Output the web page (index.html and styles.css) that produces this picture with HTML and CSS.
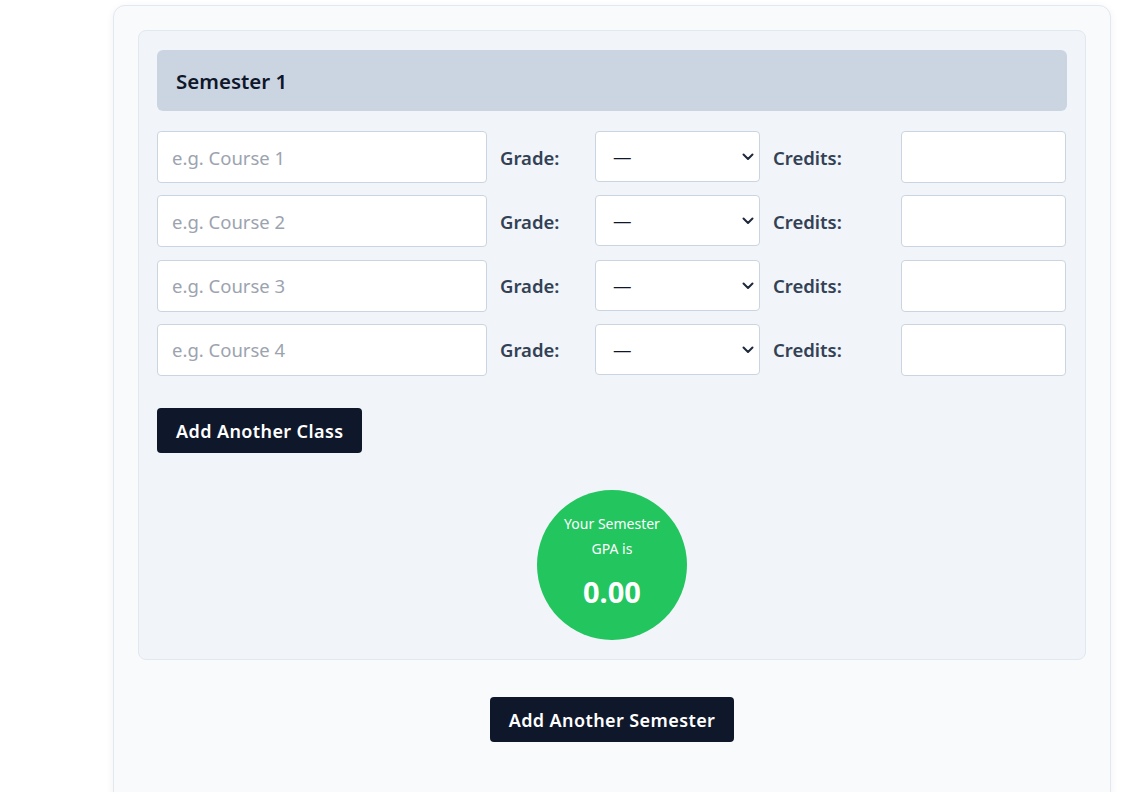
FILE: index.html
```html
<!DOCTYPE html>
<html lang="en">
<head>
<meta charset="utf-8">
<title>GPA Calculator</title>
<link rel="stylesheet" href="styles.css">
</head>
<body>
<div class="page">
  <div class="card">
    <section class="semester">
      <div class="sem-header"><h2>Semester 1</h2></div>
      <div class="rows">
        <div class="row">
          <input class="course" type="text" placeholder="e.g. Course 1">
          <label class="lbl">Grade:</label>
          <div class="select-wrap">
            <select class="grade"><option>—</option></select>
            <svg class="chev" viewBox="0 0 12 8" width="12" height="8"><path d="M1.5 1.5 L6 6 L10.5 1.5" fill="none" stroke="#1e293b" stroke-width="2" stroke-linecap="round" stroke-linejoin="round"/></svg>
          </div>
          <label class="lbl">Credits:</label>
          <input class="credits" type="text">
        </div>
        <div class="row">
          <input class="course" type="text" placeholder="e.g. Course 2">
          <label class="lbl">Grade:</label>
          <div class="select-wrap">
            <select class="grade"><option>—</option></select>
            <svg class="chev" viewBox="0 0 12 8" width="12" height="8"><path d="M1.5 1.5 L6 6 L10.5 1.5" fill="none" stroke="#1e293b" stroke-width="2" stroke-linecap="round" stroke-linejoin="round"/></svg>
          </div>
          <label class="lbl">Credits:</label>
          <input class="credits" type="text">
        </div>
        <div class="row">
          <input class="course" type="text" placeholder="e.g. Course 3">
          <label class="lbl">Grade:</label>
          <div class="select-wrap">
            <select class="grade"><option>—</option></select>
            <svg class="chev" viewBox="0 0 12 8" width="12" height="8"><path d="M1.5 1.5 L6 6 L10.5 1.5" fill="none" stroke="#1e293b" stroke-width="2" stroke-linecap="round" stroke-linejoin="round"/></svg>
          </div>
          <label class="lbl">Credits:</label>
          <input class="credits" type="text">
        </div>
        <div class="row">
          <input class="course" type="text" placeholder="e.g. Course 4">
          <label class="lbl">Grade:</label>
          <div class="select-wrap">
            <select class="grade"><option>—</option></select>
            <svg class="chev" viewBox="0 0 12 8" width="12" height="8"><path d="M1.5 1.5 L6 6 L10.5 1.5" fill="none" stroke="#1e293b" stroke-width="2" stroke-linecap="round" stroke-linejoin="round"/></svg>
          </div>
          <label class="lbl">Credits:</label>
          <input class="credits" type="text">
        </div>
      </div>
      <button class="btn add-class">Add Another Class</button>
      <div class="gpa-wrap">
        <div class="gpa">
          <p class="gpa-text">Your Semester<br>GPA is</p>
          <p class="gpa-val">0.00</p>
        </div>
      </div>
    </section>
    <div class="sem-actions">
      <button class="btn add-sem">Add Another Semester</button>
    </div>
  </div>
</div>
</body>
</html>
```
FILE: styles.css
```css
* { box-sizing: border-box; }
html, body { margin: 0; padding: 0; background: #ffffff; }
body {
  font-family: "Noto Sans", "Open Sans", "DejaVu Sans", sans-serif;
  color: #0f172a;
  overflow: hidden;
}
.page {
  padding: 5px 0 0 113px;
}
.card {
  width: 998px;
  min-height: 820px;
  background: #f8fafc;
  border: 1px solid #e2e8f0;
  border-radius: 12px;
  box-shadow: 0 2px 8px rgba(15, 23, 42, 0.06);
  padding: 24px 24px 40px;
}
.semester {
  background: #f1f5f9;
  border: 1px solid #e2e8f0;
  border-radius: 8px;
  padding: 19px 18px 19px;
}
.sem-header {
  background: #cbd5e1;
  border-radius: 6px;
  height: 61px;
  display: flex;
  align-items: center;
  padding: 0 19px;
}
.sem-header h2 {
  margin: 0;
  font-size: 20.5px;
  font-weight: 600;
  color: #0f172a;
}
.rows {
  margin-top: 20px;
  display: flex;
  flex-direction: column;
  gap: 12.33px;
}
.row {
  display: grid;
  grid-template-columns: 330px 82px 165px 115px 165px;
  column-gap: 13px;
  align-items: center;
  height: 52px;
}
.course, .credits, .grade {
  height: 52px;
  border: 1px solid #cbd5e1;
  border-radius: 4px;
  background: #ffffff;
  font-family: inherit;
  font-size: 18.5px;
  color: #0f172a;
  outline: none;
}
.course { padding: 0 14px; width: 330px; }
.credits { width: 165px; padding: 0 14px; }
.course::placeholder { color: #9ca3af; }
.lbl {
  font-size: 18.5px;
  font-weight: 600;
  color: #334155;
}
.select-wrap { position: relative; width: 165px; height: 52px; }
.grade {
  width: 165px;
  appearance: none;
  -webkit-appearance: none;
  padding: 0 17px;
  height: 51px;
}
.chev {
  position: absolute;
  right: 6px;
  top: 22px;
  pointer-events: none;
}
.btn {
  font-family: inherit;
  font-size: 18px;
  font-weight: 600;
  color: #ffffff;
  background: #0f172a;
  border: none;
  border-radius: 4px;
  height: 45px;
  padding: 2px 19px 0;
  letter-spacing: 0.4px;
  cursor: pointer;
}
.add-class { margin-top: 32px; }
.gpa-wrap {
  display: flex;
  justify-content: center;
  margin-top: 37px;
}
.gpa {
  width: 150px;
  height: 150px;
  border-radius: 50%;
  background: #22c55e;
  color: #ffffff;
  display: flex;
  flex-direction: column;
  align-items: center;
  justify-content: flex-start;
  padding-top: 21px;
  text-align: center;
}
.gpa-text {
  margin: 0;
  font-size: 14px;
  line-height: 25px;
}
.gpa-val {
  margin: 14px 0 0;
  font-size: 29px;
  font-weight: 700;
  line-height: 34px;
}
.sem-actions {
  display: flex;
  justify-content: center;
  margin-top: 37px;
}
```
